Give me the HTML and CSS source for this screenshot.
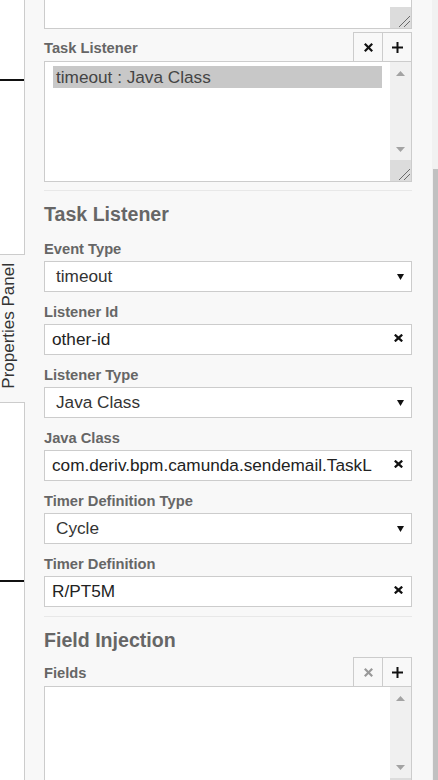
FILE: index.html
```html
<!DOCTYPE html>
<html>
<head>
<meta charset="utf-8">
<title>Properties Panel</title>
<link rel="stylesheet" href="styles.css">
</head>
<body>
<div class="app">
  <div class="canvas">
    <div class="conn conn-top"></div>
    <div class="conn conn-bottom"></div>
  </div>
  <div class="panel">
    <div class="panel-body">
      <div class="group group-top">
        <div class="textarea">
          <span class="corner corner-abs"><svg width="21" height="21" viewBox="0 0 21 21"><line x1="9" y1="20" x2="20" y2="9"/><line x1="14" y1="20" x2="20" y2="14"/></svg></span>
        </div>
        <div class="list-entry list-entry-top">
          <div class="list-head">
            <span class="label label-list">Task Listener</span>
            <div class="btns">
              <span class="btn btn-first"><svg class="ico-x" width="9" height="9" viewBox="0 0 9 9"><line x1="0.8" y1="0.8" x2="8.2" y2="8.2"/><line x1="8.2" y1="0.8" x2="0.8" y2="8.2"/></svg></span>
              <span class="btn btn-second"><svg class="ico-plus" width="11" height="11" viewBox="0 0 11 11"><line x1="0" y1="5.5" x2="11" y2="5.5"/><line x1="5.5" y1="0" x2="5.5" y2="11"/></svg></span>
            </div>
          </div>
          <div class="listbox listbox-top">
            <div class="options">
              <div class="option selected">timeout : Java Class</div>
            </div>
            <div class="vscroll">
              <span class="arrow-btn"><svg width="9" height="5" viewBox="0 0 9 5"><polygon points="0,5 4.5,0 9,5"/></svg></span>
              <span class="track"></span>
              <span class="arrow-btn"><svg width="9" height="5" viewBox="0 0 9 5"><polygon points="0,0 9,0 4.5,5"/></svg></span>
              <span class="corner"><svg width="21" height="21" viewBox="0 0 21 21"><line x1="9" y1="20" x2="20" y2="9"/><line x1="14" y1="20" x2="20" y2="14"/></svg></span>
            </div>
          </div>
        </div>
      </div>

      <div class="group group-main">
        <div class="group-label">Task Listener</div>

        <div class="field">
          <span class="label">Event Type</span>
          <div class="control select">
            <span class="value">timeout</span>
            <svg class="caret" width="7" height="6" viewBox="0 0 7 6"><polygon points="0,0 7,0 3.5,6"/></svg>
          </div>
        </div>

        <div class="field">
          <span class="label">Listener Id</span>
          <div class="control input">
            <span class="value">other-id</span>
            <svg class="clear" width="9" height="8" viewBox="0 0 9 8"><line x1="0.8" y1="0.6" x2="8.2" y2="7.4"/><line x1="8.2" y1="0.6" x2="0.8" y2="7.4"/></svg>
          </div>
        </div>

        <div class="field">
          <span class="label">Listener Type</span>
          <div class="control select">
            <span class="value">Java Class</span>
            <svg class="caret" width="7" height="6" viewBox="0 0 7 6"><polygon points="0,0 7,0 3.5,6"/></svg>
          </div>
        </div>

        <div class="field">
          <span class="label">Java Class</span>
          <div class="control input">
            <span class="value">com.deriv.bpm.camunda.sendemail.TaskL</span>
            <svg class="clear" width="9" height="8" viewBox="0 0 9 8"><line x1="0.8" y1="0.6" x2="8.2" y2="7.4"/><line x1="8.2" y1="0.6" x2="0.8" y2="7.4"/></svg>
          </div>
        </div>

        <div class="field">
          <span class="label">Timer Definition Type</span>
          <div class="control select">
            <span class="value">Cycle</span>
            <svg class="caret" width="7" height="6" viewBox="0 0 7 6"><polygon points="0,0 7,0 3.5,6"/></svg>
          </div>
        </div>

        <div class="field">
          <span class="label">Timer Definition</span>
          <div class="control input">
            <span class="value">R/PT5M</span>
            <svg class="clear" width="9" height="8" viewBox="0 0 9 8"><line x1="0.8" y1="0.6" x2="8.2" y2="7.4"/><line x1="8.2" y1="0.6" x2="0.8" y2="7.4"/></svg>
          </div>
        </div>
      </div>

      <div class="group group-fields">
        <div class="group-label">Field Injection</div>
        <div class="list-entry">
          <div class="list-head">
            <span class="label label-list">Fields</span>
            <div class="btns">
              <span class="btn btn-first disabled"><svg class="ico-x" width="9" height="9" viewBox="0 0 9 9"><line x1="0.8" y1="0.8" x2="8.2" y2="8.2"/><line x1="8.2" y1="0.8" x2="0.8" y2="8.2"/></svg></span>
              <span class="btn btn-second"><svg class="ico-plus" width="11" height="11" viewBox="0 0 11 11"><line x1="0" y1="5.5" x2="11" y2="5.5"/><line x1="5.5" y1="0" x2="5.5" y2="11"/></svg></span>
            </div>
          </div>
          <div class="listbox listbox-fields">
            <div class="options"></div>
            <div class="vscroll">
              <span class="arrow-btn"><svg width="9" height="5" viewBox="0 0 9 5"><polygon points="0,5 4.5,0 9,5"/></svg></span>
              <span class="track"></span>
              <span class="arrow-btn"><svg width="9" height="5" viewBox="0 0 9 5"><polygon points="0,0 9,0 4.5,5"/></svg></span>
              <span class="corner"><svg width="21" height="21" viewBox="0 0 21 21"><line x1="9" y1="20" x2="20" y2="9"/><line x1="14" y1="20" x2="20" y2="14"/></svg></span>
            </div>
          </div>
        </div>
      </div>
    </div>
    <div class="page-scroll"><div class="page-thumb"></div></div>
  </div>
  <div class="tab"><span class="tab-text">Properties Panel</span></div>
</div>
</body>
</html>
```

FILE: styles.css
```css
* { box-sizing: border-box; }
html, body { margin: 0; padding: 0; }
body {
  width: 438px;
  height: 780px;
  overflow: hidden;
  background: #fff;
  font-family: "Liberation Sans", Arial, sans-serif;
}
.app {
  display: flex;
  height: 780px;
  position: relative;
  overflow: hidden;
}
.canvas {
  width: 24px;
  flex: none;
  background: #fff;
  position: relative;
}
.conn {
  position: absolute;
  left: 0;
  width: 24px;
  height: 2px;
  background: #111;
}
.conn-top { top: 79px; }
.conn-bottom { top: 580px; }

.panel {
  flex: 1;
  min-width: 0;
  display: flex;
  background: #f8f8f8;
  border-left: 1px solid #ccc;
}
.panel-body {
  flex: 1;
  min-width: 0;
  padding: 0 20px 0 19px;
}
.page-scroll {
  width: 6px;
  flex: none;
  display: flex;
  flex-direction: column;
  padding-top: 169px;
  background: #f1f1f1;
}
.page-thumb {
  flex: 1;
  margin-left: 1px;
  background: #c1c1c1;
}

.group + .group { border-top: 1px solid #e8e8e8; }
.group-top { padding-bottom: 8px; }
.group-main { padding: 11px 0 9px; }
.group-fields { padding: 11px 0 0; }
.group-label {
  font-size: 19.6px;
  line-height: 24px;
  font-weight: bold;
  color: #666;
  margin-bottom: 5px;
}

.label {
  display: block;
  font-size: 14.7px;
  line-height: 17px;
  font-weight: bold;
  color: #666;
  margin-bottom: 3px;
}
.field { margin-top: 12px; }
.group-label + .field { margin-top: 15px; }

.control {
  height: 31px;
  border: 1px solid #ccc;
  background: #fff;
  display: flex;
  align-items: center;
  font-size: 17.2px;
  color: #222;
}
.control .value {
  flex: 1;
  min-width: 0;
  white-space: nowrap;
}
.input .value { padding-left: 7px; }
.select .value { padding-left: 11px; color: #333; }
.caret { fill: #111; margin-right: 7px; flex: none; }
.clear {
  stroke: #111;
  stroke-width: 2.2;
  margin: 0 8px 4px 12px;
  flex: none;
}

.textarea {
  height: 29px;
  border: 1px solid #ccc;
  border-top: 0;
  background: #fff;
  position: relative;
}
.corner {
  display: block;
  width: 21px;
  height: 21px;
  background: #dcdcdc;
}
.corner-abs {
  position: absolute;
  right: 0;
  bottom: 0;
}
.corner svg { display: block; stroke: #6a6a6a; stroke-width: 1; }

.list-entry-top { margin-top: 3px; }
.list-head {
  height: 29px;
  display: flex;
  justify-content: space-between;
  align-items: flex-end;
}
.label-list { margin-bottom: 0; padding-bottom: 4px; }
.btns { display: flex; height: 29px; }
.btn {
  height: 29px;
  display: flex;
  align-items: center;
  justify-content: center;
  border-top: 1px solid #ccc;
  border-right: 1px solid #ccc;
  background: #f8f8f8;
}
.btn-first { width: 30px; border-left: 1px solid #ccc; }
.btn-second { width: 29px; }
.ico-x { stroke: #111; stroke-width: 2.2; }
.ico-plus { stroke: #111; stroke-width: 2; }
.btn.disabled .ico-x { stroke: #999; }

.listbox {
  display: flex;
  border: 1px solid #ccc;
  background: #fff;
  overflow: hidden;
}
.listbox-top { height: 121px; }
.listbox-fields { height: 114px; }
.options {
  flex: 1;
  min-width: 0;
  padding: 4px 8px 0 8px;
}
.option {
  height: 22px;
  line-height: 22px;
  font-size: 17.2px;
  padding-left: 3px;
  color: #444;
  white-space: nowrap;
}
.option.selected { background: #c8c8c8; }
.vscroll {
  width: 21px;
  flex: none;
  display: flex;
  flex-direction: column;
  background: #f0f0f0;
}
.arrow-btn {
  height: 22px;
  flex: none;
  display: flex;
  align-items: center;
  justify-content: center;
}
.arrow-btn svg { fill: #a3a3a3; }
.track { flex: 1; }
.vscroll .corner { flex: none; }

.tab {
  position: absolute;
  left: 0;
  top: 254px;
  width: 25px;
  height: 149px;
  background: #f8f8f8;
  border-top: 1px solid #ccc;
  border-bottom: 1px solid #ccc;
  display: flex;
  align-items: center;
  justify-content: flex-start;
  padding-bottom: 6px;
}
.tab-text {
  writing-mode: vertical-rl;
  transform: rotate(180deg);
  font-size: 17px;
  line-height: 19px;
  color: #333;
  white-space: nowrap;
  margin-left: -1px;
}
```
